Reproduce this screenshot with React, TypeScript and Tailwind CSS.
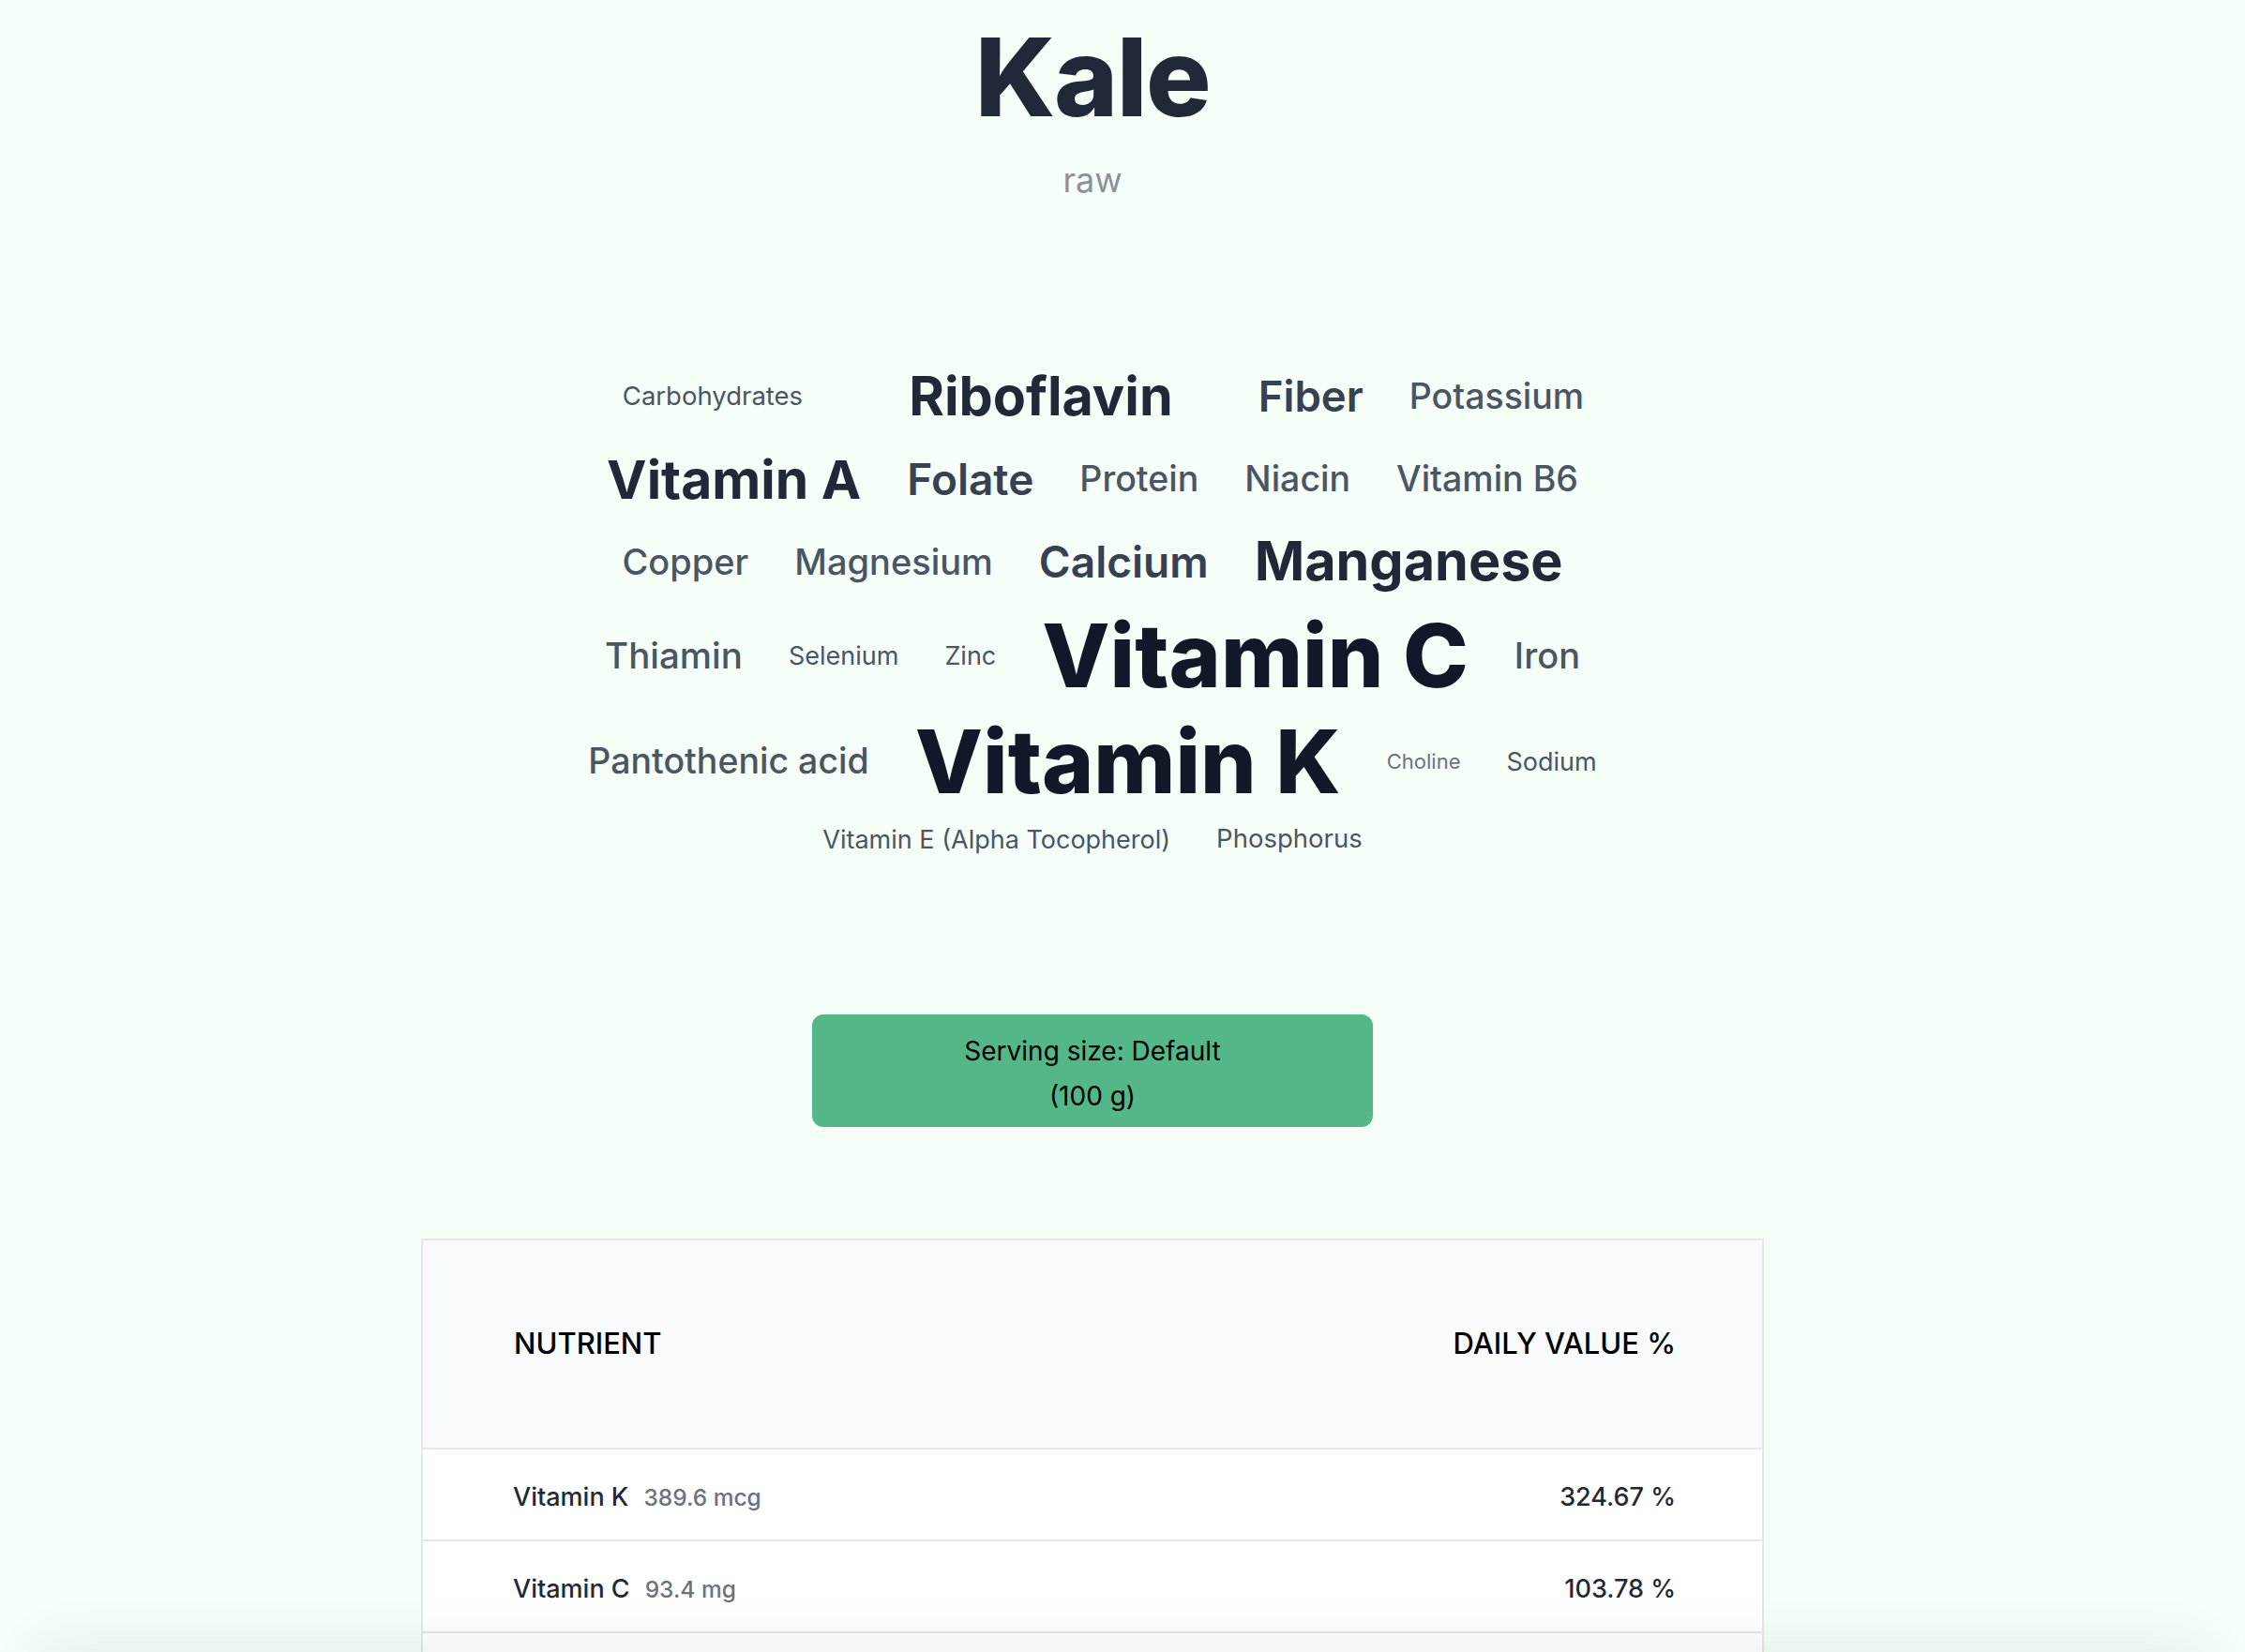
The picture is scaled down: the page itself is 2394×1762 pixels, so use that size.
import React from "react";

type Word = { text: string; cls: string };

const cloud: { h: string; words: Word[] }[] = [
  {
    h: "h-[88px]",
    words: [
      { text: "Carbohydrates", cls: "ml-[23px] text-[27.5px] font-normal text-[#4b5563]" },
      { text: "Riboflavin", cls: "ml-[64px] mr-[42px] text-[57.5px] font-bold text-[#1f2937]" },
      { text: "Fiber", cls: "text-[45.5px] font-semibold text-[#374151]" },
      { text: "Potassium", cls: "text-[37.5px] font-medium text-[#4b5563]" },
    ],
  },
  {
    h: "h-[88px]",
    words: [
      { text: "Vitamin A", cls: "text-[57px] font-bold text-[#1f2937]" },
      { text: "Folate", cls: "text-[46px] font-semibold text-[#374151]" },
      { text: "Protein", cls: "text-[37.5px] font-medium text-[#4b5563]" },
      { text: "Niacin", cls: "text-[37.5px] font-medium text-[#4b5563]" },
      { text: "Vitamin B6", cls: "text-[37.5px] font-medium text-[#4b5563]" },
    ],
  },
  {
    h: "h-[88px]",
    words: [
      { text: "Copper", cls: "text-[38px] font-medium text-[#4b5563]" },
      { text: "Magnesium", cls: "text-[38px] font-medium text-[#4b5563]" },
      { text: "Calcium", cls: "text-[46px] font-semibold text-[#374151]" },
      { text: "Manganese", cls: "text-[57.5px] font-bold text-[#1f2937]" },
    ],
  },
  {
    h: "h-[112px]",
    words: [
      { text: "Thiamin", cls: "text-[38.5px] font-medium text-[#4b5563]" },
      { text: "Selenium", cls: "text-[27px] font-normal text-[#4b5563]" },
      { text: "Zinc", cls: "text-[27px] font-normal text-[#4b5563]" },
      { text: "Vitamin C", cls: "text-[94px] font-extrabold text-[#111827]" },
      { text: "Iron", cls: "text-[38px] font-medium text-[#4b5563]" },
    ],
  },
  {
    h: "h-[114px]",
    words: [
      { text: "Pantothenic acid", cls: "text-[37.5px] font-medium text-[#4b5563]" },
      { text: "Vitamin K", cls: "text-[94px] font-extrabold text-[#111827]" },
      { text: "Choline", cls: "text-[22px] font-normal text-[#6b7280]" },
      { text: "Sodium", cls: "text-[27px] font-normal text-[#4b5563]" },
    ],
  },
  {
    h: "h-[52px]",
    words: [
      { text: "Vitamin E (Alpha Tocopherol)", cls: "text-[27px] font-normal text-[#4b5563]" },
      { text: "Phosphorus", cls: "text-[27.5px] font-normal text-[#4b5563]" },
    ],
  },
];

const nutrients = [
  { name: "Vitamin K", amount: "389.6 mcg", dv: "324.67 %" },
  { name: "Vitamin C", amount: "93.4 mg", dv: "103.78 %" },
  { name: "Manganese", amount: "0.92 mg", dv: "40 %" },
  { name: "Vitamin A", amount: "241 mcg", dv: "26.78 %" },
  { name: "Riboflavin", amount: "0.35 mg", dv: "26.92 %" },
  { name: "Calcium", amount: "254 mg", dv: "19.54 %" },
];

export default function App() {
  return (
    <div className="relative min-h-screen overflow-hidden bg-[#f6fef8] font-['Inter',sans-serif]">
      <div className="flex flex-col items-center pr-[64px]">
        <h1 className="pt-[24px] text-[116px] font-extrabold leading-none tracking-[-1.5px] text-[#1f2937]">
          Kale
        </h1>
        <p className="mt-[34px] text-[36px] leading-none text-[#8b919c]">raw</p>

        <div className="mt-[169px] flex w-full flex-col">
          {cloud.map((row, i) => (
            <div key={i} className={`flex items-center justify-center gap-x-[49px] ${row.h}`}>
              {row.words.map((w) => (
                <span key={w.text} className={`whitespace-nowrap leading-none ${w.cls}`}>
                  {w.text}
                </span>
              ))}
            </div>
          ))}
        </div>

        <button className="mt-[161px] w-[598px] rounded-[12px] bg-[#54b787] pb-[9px] pt-[15px] text-[28px] leading-[48px] text-black">
          Serving size: Default
          <br />
          (100 g)
        </button>

        <div className="mt-[119px] w-[1432px] border-2 border-[#e5e7eb] bg-white">
          <div className="flex h-[223px] items-center justify-between border-b-2 border-[#e5e7eb] bg-[#f9fafb] pl-[97px] pr-[92px] text-[31px] font-medium uppercase text-black">
            <span>Nutrient</span>
            <span>Daily Value %</span>
          </div>
          {nutrients.map((n) => (
            <div
              key={n.name}
              className="flex h-[98px] items-center justify-between border-b-2 border-[#e5e7eb] pl-[96px] pr-[92px] pt-[6px]"
            >
              <div className="flex items-baseline gap-[16px]">
                <span className="text-[27px] font-medium text-[#1f2937]">{n.name}</span>
                <span className="text-[24.5px] font-medium text-[#6b7280]">{n.amount}</span>
              </div>
              <span className="text-[27px] font-medium text-[#1f2937]">{n.dv}</span>
            </div>
          ))}
        </div>
      </div>
      <div className="fixed inset-x-[40px] -bottom-[100px] z-10 h-[100px] shadow-[0_-8px_60px_rgba(0,0,0,0.07)]" />
    </div>
  );
}
